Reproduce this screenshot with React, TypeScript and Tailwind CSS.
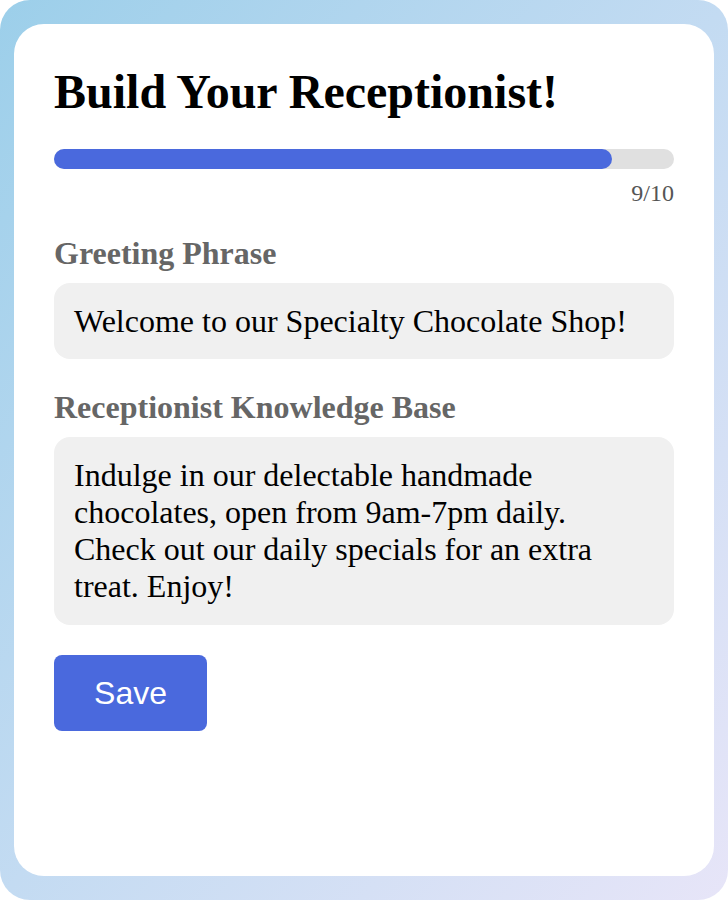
const serif = "font-['Liberation_Serif','Times_New_Roman',serif]";

export default function App() {
  const step = 9;
  const total = 10;

  return (
    <div className="w-[728px] h-[900px] bg-white">
      <div className="h-full rounded-[30px] bg-gradient-to-br from-[#9ccfea] via-[#c3dbf2] to-[#e7e5f8] px-[14px] py-[24px]">
        <div className={`h-full rounded-[30px] bg-white p-[40px] ${serif}`}>
          <h1 className="text-[48px] font-bold leading-[55px] text-black">Build Your Receptionist!</h1>

          {/* Progress */}
          <div className="mt-[30px]">
            <div className="h-[20px] w-full rounded-full bg-[#e0e0e0]">
              <div className="h-full rounded-full bg-[#4a69dd]" style={{ width: `${(step / total) * 100}%` }} />
            </div>
            <div className="text-right text-[24px] leading-[28px] text-[#555] mt-[10px]">
              {step}/{total}
            </div>
          </div>

          {/* Greeting */}
          <label className="block mt-[28px] text-[32px] leading-[37px] font-bold text-[#666]">Greeting Phrase</label>
          <div className="mt-[11px] h-[76px] rounded-[16px] bg-[#f0f0f0] px-[20px] flex items-center text-[32px] leading-[37px] text-black">
            Welcome to our Specialty Chocolate Shop!
          </div>

          {/* Knowledge base */}
          <label className="block mt-[30px] text-[32px] leading-[37px] font-bold text-[#666]">Receptionist Knowledge Base</label>
          <div className="mt-[11px] rounded-[16px] bg-[#f0f0f0] p-[20px] text-[32px] leading-[37px] text-black">
            Indulge in our delectable handmade chocolates, open from 9am-7pm daily. Check out our daily specials for an extra treat. Enjoy!
          </div>

          <button className="mt-[30px] w-[153px] h-[76px] rounded-[8px] bg-[#4a69dd] text-white text-[32px] font-['Liberation_Sans',Arial,sans-serif]">
            Save
          </button>
        </div>
      </div>
    </div>
  );
}
